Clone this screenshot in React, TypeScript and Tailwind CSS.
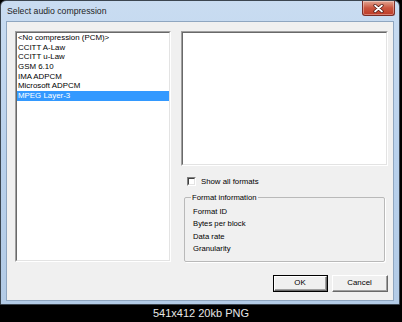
import React from "react";

const F = { fontFamily: '"Liberation Sans", Arial, sans-serif' };

function Sunken({ className, children }: { className?: string; children?: React.ReactNode }) {
  return (
    <div className={"border-t border-l border-[#a0a0a0] border-b border-r border-b-white border-r-white " + (className ?? "")}>
      <div className="w-full h-full border-t border-l border-[#696969] border-b border-r border-b-[#e3e3e3] border-r-[#e3e3e3] bg-white">
        {children}
      </div>
    </div>
  );
}

function Btn({ label, def }: { label: string; def?: boolean }) {
  return (
    <div className={"h-[17px] " + (def ? "w-[55px] border border-black" : "w-[56px]")}>
      <div className="w-full h-full border-t border-l border-white border-b border-r border-b-[#696969] border-r-[#696969]">
        <div className="w-full h-full border-b border-r border-[#a0a0a0] bg-[#f0f0f0] flex items-center justify-center text-[7.9px] text-black leading-none">
          {label}
        </div>
      </div>
    </div>
  );
}

export default function App() {
  const items = [
    "<No compression (PCM)>",
    "CCITT A-Law",
    "CCITT u-Law",
    "GSM 6.10",
    "IMA ADPCM",
    "Microsoft ADPCM",
    "MPEG Layer-3",
  ];
  return (
    <div className="w-[402px] h-[322px] bg-black flex flex-col" style={F}>
      <div className="w-[400px] h-[305px] border border-[#3c4650] rounded-t-[6px] bg-gradient-to-b from-[#c9dcf1] via-[#b9d1ec] to-[#b3cbe6] flex flex-col px-[5px] pb-[3px]">
        <div className="h-[20px] flex items-start justify-between">
          <div className="pl-[1px] pt-[6px] text-[8.7px] leading-none text-[#1e1e1e]">Select audio compression</div>
          <div className="mr-[-1px] w-[33px] h-[15px] rounded-b-[3px] border border-t-0 border-[#7a2c25] bg-gradient-to-b from-[#e1a592] via-[#c9553f] to-[#bf3b26] flex items-center justify-center shadow-[inset_0_0_0_1px_rgba(255,255,255,0.35)]">
            <svg width="11" height="9" viewBox="0 0 11 9">
              <path d="M2 1.5 L9 7.5 M9 1.5 L2 7.5" stroke="#4a1510" strokeWidth="3.2" strokeLinecap="round" />
              <path d="M2 1.5 L9 7.5 M9 1.5 L2 7.5" stroke="#ffffff" strokeWidth="1.7" strokeLinecap="round" />
            </svg>
          </div>
        </div>
        <div className="flex-1 border border-[#8fa6c0] bg-[#f0f0f0] flex flex-col">
          <div className="flex pt-[9px] pl-[8px] pr-[5px] gap-[10px]">
            <Sunken className="w-[156px] h-[231px]">
              <div className="flex flex-col text-[7.9px] text-black">
                {items.map((it) => (
                  <div
                    key={it}
                    className={
                      "h-[9.7px] leading-[9.7px] pl-[1px] whitespace-nowrap " +
                      (it === "MPEG Layer-3" ? "bg-[#3399ff] text-white" : "")
                    }
                  >
                    {it}
                  </div>
                ))}
              </div>
            </Sunken>
            <div className="w-[207px] flex flex-col">
              <Sunken className="w-[207px] h-[135px]" />
              <div className="mt-[11px] pl-[6px] flex items-center gap-[5px]">
                <div className="w-[9px] h-[9px] border-t border-l border-[#808080] border-b border-r border-b-white border-r-white">
                  <div className="w-full h-full bg-white border-t border-l border-[#404040] border-b border-r border-b-[#e3e3e3] border-r-[#e3e3e3]" />
                </div>
                <span className="text-[7.8px] leading-none text-black">Show all formats</span>
              </div>
              <fieldset className="mt-[7px] mx-[3px] h-[69px] border border-[#b9b9b9] rounded-[2px] shadow-[1px_1px_0_#ffffff] px-[8px]">
                <legend className="ml-[-2px] px-[1px] text-[7.7px] leading-[9px] text-black">Format information</legend>
                <div className="flex flex-col text-[7.7px] text-black pt-[4px]">
                  <div className="h-[12.4px] leading-[12.4px]">Format ID</div>
                  <div className="h-[12.4px] leading-[12.4px]">Bytes per block</div>
                  <div className="h-[12.4px] leading-[12.4px]">Data rate</div>
                  <div className="h-[12.4px] leading-[12.4px]">Granularity</div>
                </div>
              </fieldset>
            </div>
          </div>
          <div className="mt-[13px] pr-[5px] flex justify-end gap-[4px]">
            <Btn label="OK" def />
            <Btn label="Cancel" />
          </div>
        </div>
      </div>
      <div className="flex-1 flex items-center justify-center text-[11px] text-[#e6e6e6] leading-none">
        541x412 20kb PNG
      </div>
    </div>
  );
}
